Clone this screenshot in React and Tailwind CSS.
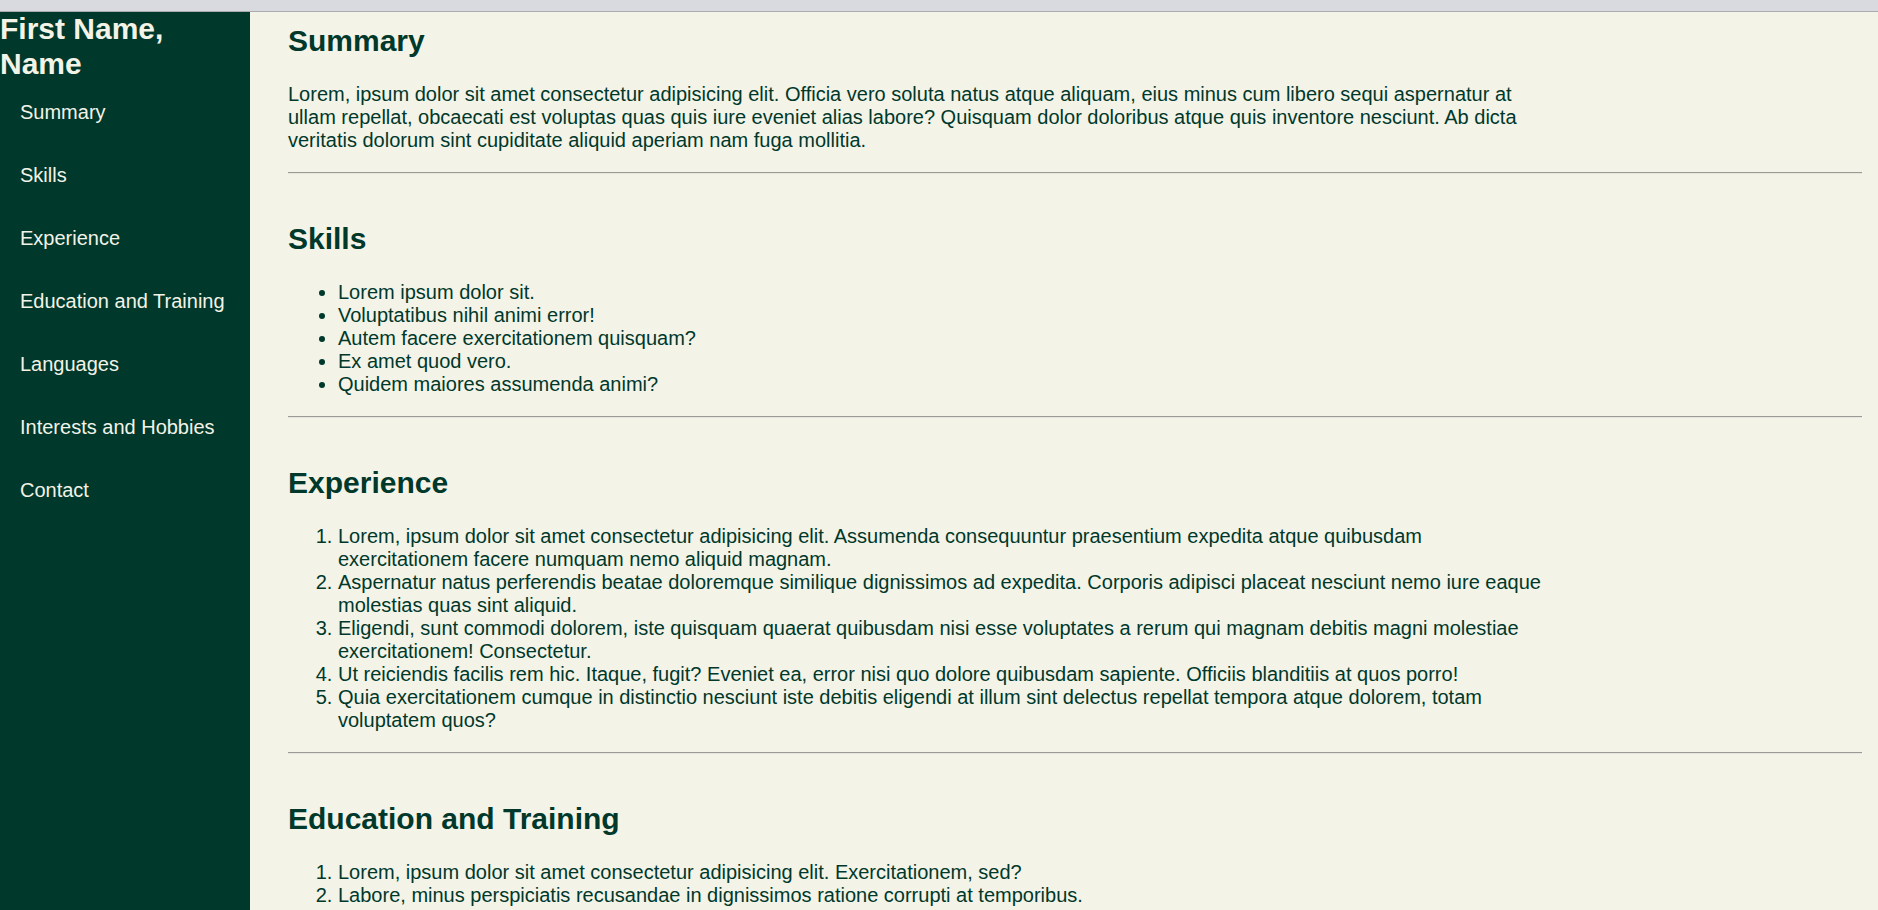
const navItems = [
  "Summary",
  "Skills",
  "Experience",
  "Education and Training",
  "Languages",
  "Interests and Hobbies",
  "Contact",
];

const skills = [
  "Lorem ipsum dolor sit.",
  "Voluptatibus nihil animi error!",
  "Autem facere exercitationem quisquam?",
  "Ex amet quod vero.",
  "Quidem maiores assumenda animi?",
];

const experience = [
  "Lorem, ipsum dolor sit amet consectetur adipisicing elit. Assumenda consequuntur praesentium expedita atque quibusdam exercitationem facere numquam nemo aliquid magnam.",
  "Aspernatur natus perferendis beatae doloremque similique dignissimos ad expedita. Corporis adipisci placeat nesciunt nemo iure eaque molestias quas sint aliquid.",
  "Eligendi, sunt commodi dolorem, iste quisquam quaerat quibusdam nisi esse voluptates a rerum qui magnam debitis magni molestiae exercitationem! Consectetur.",
  "Ut reiciendis facilis rem hic. Itaque, fugit? Eveniet ea, error nisi quo dolore quibusdam sapiente. Officiis blanditiis at quos porro!",
  "Quia exercitationem cumque in distinctio nesciunt iste debitis eligendi at illum sint delectus repellat tempora atque dolorem, totam voluptatem quos?",
];

const education = [
  "Lorem, ipsum dolor sit amet consectetur adipisicing elit. Exercitationem, sed?",
  "Labore, minus perspiciatis recusandae in dignissimos ratione corrupti at temporibus.",
];

const Divider = () => (
  <hr className="mt-[20px] h-0 border-0 border-t border-b border-t-[#9a9a96] border-b-[#e6e6dc]" />
);

const Section = ({ title, first, children }) => (
  <section>
    <h2
      className={`${first ? "" : "mt-[48px]"} text-[30px] font-bold leading-[34.5px]`}
    >
      {title}
    </h2>
    <div className="mt-[24.5px]">{children}</div>
    <Divider />
  </section>
);

export default function App() {
  return (
    <div className="min-h-screen bg-[#f3f3e8] text-[#00382b] font-['Liberation_Sans',Arial,sans-serif]">
      {/* browser strip */}
      <div className="h-[12px] bg-[#d9dadf] border-b border-[#a9abae]" />

      <div className="flex">
        <aside className="w-[250px] shrink-0 bg-[#00382b] text-[#f3f3e8] min-h-[898px]">
          <h1 className="text-[30px] font-bold leading-[34.5px]">
            First Name, Name
          </h1>
          <ul>
            {navItems.map((item) => (
              <li key={item}>
                <a
                  href="#"
                  className="block px-[20px] py-[20px] text-[20px] leading-[23px]"
                >
                  {item}
                </a>
              </li>
            ))}
          </ul>
        </aside>

        <main className="flex-1 pl-[38px] pr-[16px] pt-[12px] text-[20px] leading-[23px]">
          <Section title="Summary" first>
            <p className="w-4/5">
              Lorem, ipsum dolor sit amet consectetur adipisicing elit. Officia
              vero soluta natus atque aliquam, eius minus cum libero sequi
              aspernatur at ullam repellat, obcaecati est voluptas quas quis iure
              eveniet alias labore? Quisquam dolor doloribus atque quis
              inventore nesciunt. Ab dicta veritatis dolorum sint cupiditate
              aliquid aperiam nam fuga mollitia.
            </p>
          </Section>

          <Section title="Skills">
            <ul className="w-4/5 list-disc pl-[50px]">
              {skills.map((s) => (
                <li key={s}>{s}</li>
              ))}
            </ul>
          </Section>

          <Section title="Experience">
            <ol className="w-4/5 list-decimal pl-[50px]">
              {experience.map((e) => (
                <li key={e}>{e}</li>
              ))}
            </ol>
          </Section>

          <Section title="Education and Training">
            <ol className="w-4/5 list-decimal pl-[50px]">
              {education.map((e) => (
                <li key={e}>{e}</li>
              ))}
            </ol>
          </Section>

          <Section title="Languages">
            <ul className="w-4/5 list-disc pl-[50px]">
              <li>English</li>
              <li>French</li>
            </ul>
          </Section>

          <Section title="Interests and Hobbies">
            <p className="w-4/5">
              Lorem ipsum dolor sit amet consectetur adipisicing elit.
            </p>
          </Section>

          <Section title="Contact">
            <p className="w-4/5">email@example.com</p>
          </Section>
        </main>
      </div>
    </div>
  );
}
